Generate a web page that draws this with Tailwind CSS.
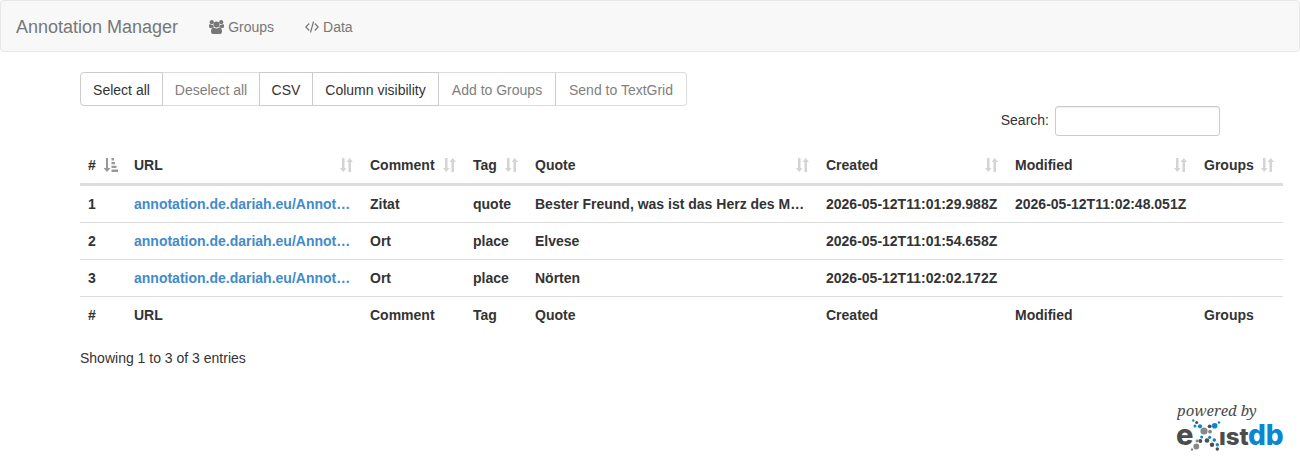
<!DOCTYPE html>
<html lang="en">
<head>
<meta charset="utf-8">
<meta name="viewport" content="width=device-width, initial-scale=1">
<title>Annotation Manager</title>
<script src="https://cdn.jsdelivr.net/npm/@tailwindcss/browser@4"></script>
</head>
<body class="bg-white font-['Liberation_Sans',Arial,sans-serif] text-sm leading-5 text-[#333]">
<svg class="hidden" aria-hidden="true">
  <symbol id="sort" viewBox="0 0 14 14"><path d="M2 0h2.500v10H6.500L3.250 14 0 10h2zM8.500 14V4h-2L9.750 0 13 4h-2v10z"/></symbol>
  <symbol id="sort-asc" viewBox="0 0 14 14"><path d="M2 0h2v10h2.500L3 14-.5 10H2zM7.500 0H10v2.500H7.500zM7.500 4h3.500v2.200H7.500zM7.500 7.800h5V10h-5zM7.500 11.500H14V14H7.500z"/></symbol>
</svg>
<nav class="mb-5 flex h-[52px] items-center rounded border border-[#e7e7e7] bg-[#f8f8f8] pt-0.5 text-[#777]">
  <a href="#" class="px-[15px] text-lg leading-5">Annotation Manager</a>
  <a href="#" class="flex items-center gap-1 pr-[15px] pl-4">
    <svg class="h-[14px] w-[15px] fill-current" viewBox="0 0 15 14"><circle cx="2.800" cy="2.200" r="2.100"/><circle cx="12.200" cy="2.200" r="2.100"/><circle cx="7.500" cy="4.500" r="3"/><path d="M0 5.500Q0 4 1 4q2 1.300 3 .7Q4 6 5 7q-1.200 0-2 1H1.500Q0 8 0 6.500zM15 5.500Q15 4 14 4q-2 1.300-3 .7Q11 6 10 7q1.200 0 2 1h1.500Q15 8 15 6.500zM2 11.500Q2 7.500 4.800 7.500q2.700 1.800 5.400 0Q13 7.500 13 11.500 13 14 11 14H4Q2 14 2 11.500z"/></svg>
    Groups</a>
  <a href="#" class="flex items-center gap-1 pr-[15px] pl-4">
    <svg class="h-[14px] w-[14px] fill-none stroke-current" viewBox="0 0 14 14" stroke-width="1.200"><path d="M4.200 3.500.8 7l3.400 3.500M9.800 3.500 13.200 7l-3.400 3.500M8.500 1.500l-3 11"/></svg>
    Data</a>
</nav>
<main class="px-20">
  <div class="flex [&>button]:h-[34px] [&>button]:pt-0.5 [&>button]:whitespace-nowrap">
    <button class="w-[83px] rounded-l border border-[#ccc]">Select all</button>
    <button disabled class="-ml-px w-[98px] border border-x-[#ccc] border-y-[#ddd] text-[#808080]">Deselect all</button>
    <button class="-ml-px w-[54px] border border-[#ccc]">CSV</button>
    <button class="-ml-px w-[127px] border border-[#ccc]">Column visibility</button>
    <button disabled class="-ml-px w-[118px] border border-[#ddd] border-l-[#ccc] text-[#808080]">Add to Groups</button>
    <button disabled class="-ml-px w-[132px] rounded-r border border-[#ddd] border-l-[#ccc] text-[#808080]">Send to TextGrid</button>
  </div>
  <div class="mb-[11px] flex items-center justify-end gap-1.5">
    <label for="search" class="pb-0.5">Search:</label>
    <input id="search" type="search" class="h-[30px] w-[165px] rounded-[3px] border border-[#ccc] px-2.5 shadow-[inset_0_1px_1px_rgba(0,0,0,0.075)]">
  </div>
  <table class="w-[calc(100%+63px)] table-fixed border-separate border-spacing-0 text-left font-bold [&_td]:truncate [&_td]:border-b [&_td]:border-[#ddd] [&_td]:p-2 [&_th]:p-2">
    <colgroup><col class="w-[46px]"><col class="w-[236px]"><col class="w-[103px]"><col class="w-[62px]"><col><col class="w-[189px]"><col class="w-[189px]"><col class="w-[87px]"></colgroup>
    <thead class="[&_div]:flex [&_div]:items-center [&_div]:justify-between [&_svg]:size-[14px] [&_svg]:shrink-0 [&_svg]:fill-[#d4d4d4] [&_th]:border-b-3 [&_th]:border-[#ddd]">
      <tr>
        <th><div>#<svg class="overflow-visible fill-[#999]!"><use href="#sort-asc"/></svg></div></th>
        <th><div>URL<svg><use href="#sort"/></svg></div></th>
        <th><div>Comment<svg><use href="#sort"/></svg></div></th>
        <th><div>Tag<svg><use href="#sort"/></svg></div></th>
        <th><div>Quote<svg><use href="#sort"/></svg></div></th>
        <th><div>Created<svg><use href="#sort"/></svg></div></th>
        <th><div>Modified<svg><use href="#sort"/></svg></div></th>
        <th><div>Groups<svg><use href="#sort"/></svg></div></th>
      </tr>
    </thead>
    <tbody>
      <tr><td>1</td><td><a href="#" class="text-[#428bca]">annotation.de.dariah.eu/Annot…</a></td><td>Zitat</td><td>quote</td><td>Bester Freund, was ist das Herz des M…</td><td>2026-05-12T11:01:29.988Z</td><td>2026-05-12T11:02:48.051Z</td><td></td></tr>
      <tr><td>2</td><td><a href="#" class="text-[#428bca]">annotation.de.dariah.eu/Annot…</a></td><td>Ort</td><td>place</td><td>Elvese</td><td>2026-05-12T11:01:54.658Z</td><td></td><td></td></tr>
      <tr><td>3</td><td><a href="#" class="text-[#428bca]">annotation.de.dariah.eu/Annot…</a></td><td>Ort</td><td>place</td><td>Nörten</td><td>2026-05-12T11:02:02.172Z</td><td></td><td></td></tr>
    </tbody>
    <tfoot>
      <tr><th>#</th><th>URL</th><th>Comment</th><th>Tag</th><th>Quote</th><th>Created</th><th>Modified</th><th>Groups</th></tr>
    </tfoot>
  </table>
  <p class="mt-[15px]">Showing 1 to 3 of 3 entries</p>
</main>
<footer class="mt-8 flex justify-end pr-4">
  <a href="#" aria-label="powered by eXist-db">
    <svg class="h-[54px] w-[109px]" viewBox="0 0 109 54">
      <text x="2" y="16" font-family="'Droid Serif','Noto Serif','Liberation Serif',serif" font-style="italic" font-size="15" fill="#4d4d4d">powered by</text>
      <g font-family="Inter,sans-serif" font-weight="800" fill="#4d4d4d">
        <text x="1" y="45" font-size="29">e</text>
        <text x="44" y="45" font-size="24">ıst</text>
        <text x="73" y="45" font-size="28" fill="#0b86d0">db</text>
      </g>
      <g fill="#0b86d0"><circle cx="39.700" cy="25.700" r="2.800"/><circle cx="18.300" cy="20.500" r="1.200"/><circle cx="20" cy="26" r="1.500"/><circle cx="25" cy="26.300" r="2.100"/><circle cx="44" cy="22.500" r="1.200"/><circle cx="26.700" cy="37" r="1.500"/><circle cx="34.700" cy="37.300" r="1.600"/><circle cx="39.300" cy="40" r="1.800"/><circle cx="42.300" cy="44.700" r="1.700"/></g>
      <g fill="#4d4d4d"><circle cx="21.700" cy="22.500" r="1.500"/><circle cx="34.700" cy="26.300" r="1.900"/><circle cx="32" cy="40.500" r="2.300"/><circle cx="25.300" cy="41" r="2"/><circle cx="37" cy="44.700" r="2.200"/><circle cx="42.300" cy="49" r="1.700"/></g>
      <g fill="#888"><circle cx="29" cy="31" r="3.600"/><circle cx="21.300" cy="46.500" r="2.900"/><circle cx="35" cy="31.700" r="1.900"/><circle cx="22" cy="41" r="1.400"/><circle cx="17" cy="49.500" r="1.200"/></g>
    </svg>
  </a>
</footer>
</body>
</html>
